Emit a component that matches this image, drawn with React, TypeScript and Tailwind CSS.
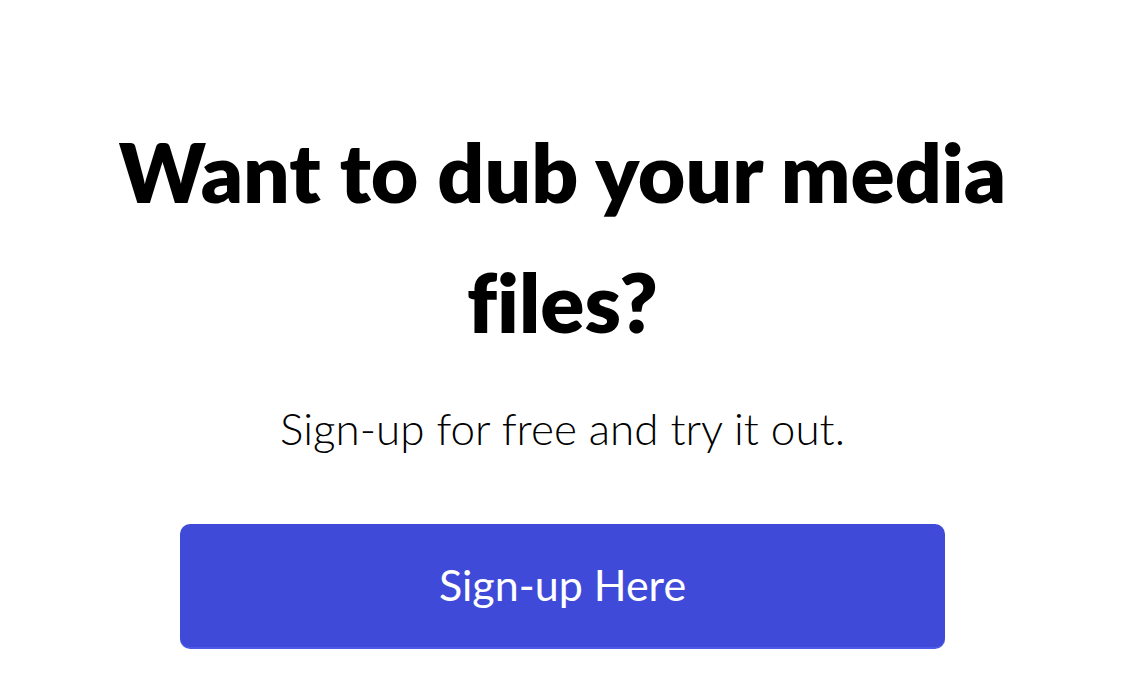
export default function App() {
  return (
    <div className="min-h-screen bg-white flex flex-col items-center font-['Lato','Noto_Sans',sans-serif] text-black [font-variant-ligatures:none]">
      <h1 className="mt-[106px] text-[82px] font-extrabold leading-[130px] text-center w-[940px]">
        Want to dub your media files?
      </h1>
      <p className="mt-[32px] text-[44px] font-light leading-[60px] text-center">
        Sign-up for free and try it out.
      </p>
      <button className="mt-[66px] w-[765px] h-[125px] rounded-[10px] bg-[#3f4bd8] border-b-2 border-[#4b5ae8] text-white text-[43px] font-normal">
        Sign-up Here
      </button>
    </div>
  )
}
